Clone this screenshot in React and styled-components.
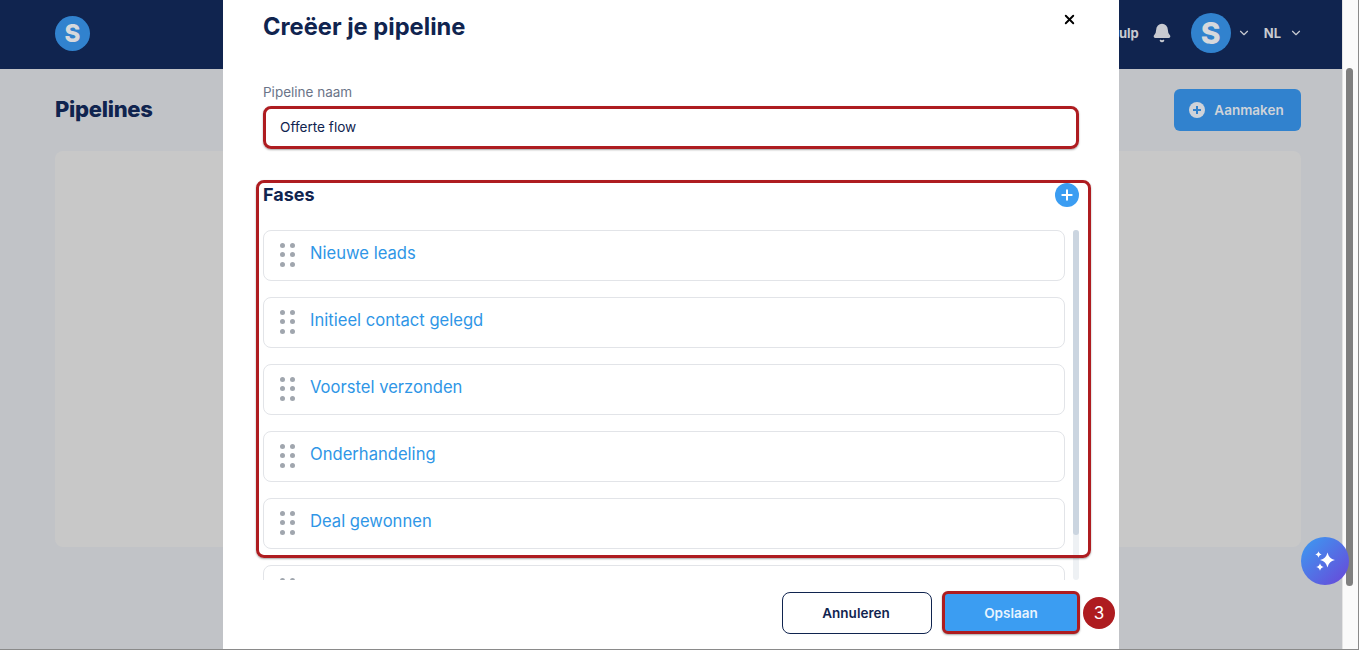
import React from 'react';
import styled, { createGlobalStyle } from 'styled-components';
import { ChevronDown, X, Plus, Bell } from 'lucide-react';

const Global = createGlobalStyle`
  html, body { margin: 0; padding: 0; height: 100%; overflow: hidden; background: #fff; }
  body { font-family: Inter, "Liberation Sans", sans-serif; }
  * { box-sizing: border-box; }
`;

const Frame = styled.div`
  position: relative;
  width: 1359px;
  height: 650px;
  display: flex;
  overflow: hidden;
  border-bottom: 1px solid #8a8a8a;
  border-right: 1px solid #8a8a8a;
`;
const Page = styled.div`
  flex: 1;
  min-width: 0;
  display: flex;
  flex-direction: column;
  background: #c1c3c7;
`;
const Navbar = styled.header`
  height: 69px;
  flex: none;
  background: #10244f;
  display: flex;
  align-items: center;
  padding: 0 39px 3px 55px;
  color: #c9cbd1;
`;
const LogoCircle = styled.div`
  width: ${p => p.$size}px;
  height: ${p => p.$size}px;
  border-radius: 50%;
  background: #3182ce;
  color: #d6d8dc;
  display: flex;
  align-items: center;
  justify-content: center;
  font-weight: 800;
  font-size: ${p => p.$font}px;
  line-height: 1;
  flex: none;
  margin: ${p => p.$margin || 0};
`;
const Spacer = styled.div`flex: 1;`;
const NavItem = styled.span`
  font-size: 13px;
  font-weight: 700;
  color: #c9cbd1;
  margin: ${p => p.$margin || 0};
`;
const NavCluster = styled.div`
  display: flex;
  align-items: center;
`;
const Main = styled.main`
  flex: 1;
  padding: 20px 41px 0 55px;
`;
const HeadRow = styled.div`
  display: flex;
  justify-content: space-between;
  align-items: center;
  height: 42px;
  margin-bottom: 20px;
`;
const PageTitle = styled.h1`
  margin: -2px 0 0;
  font-size: 22px;
  font-weight: 800;
  letter-spacing: -0.27px;
  color: #10244f;
`;
const CreateButton = styled.button`
  width: 127px;
  height: 42px;
  border: 0;
  border-radius: 6px;
  background: #3182ce;
  color: #cfd3d9;
  font: 600 13.5px Inter, sans-serif;
  display: flex;
  align-items: center;
  justify-content: center;
  gap: 9px;
  padding: 0 8px 0 6px;
`;
const EmptyCard = styled.div`
  height: 396px;
  border-radius: 8px;
  background: #c8c8c8;
`;
const ScrollColumn = styled.div`
  width: 16px;
  flex: none;
  background: #fafafa;
  border-left: 1px solid #e4e4e4;
  padding: 68px 5px 0 3px;
`;
const ScrollThumb = styled.div`
  height: 518px;
  border-radius: 4px;
  background: #7f7f7f;
`;
const Modal = styled.section`
  position: absolute;
  left: 223px;
  top: 0;
  width: 896px;
  height: 650px;
  background: #fff;
  padding: 12px 40px 0;
  display: flex;
  flex-direction: column;
`;
const ModalHead = styled.div`
  height: 30px;
  display: flex;
  justify-content: space-between;
  align-items: center;
  margin-bottom: 42px;
`;
const ModalTitle = styled.h2`
  margin: 0 0 1px;
  font-size: 23.7px;
  font-weight: 700;
  color: #10244f;
`;
const CloseButton = styled.button`
  border: 0;
  background: none;
  padding: 0;
  display: flex;
  color: #000;
  margin: -16px 2px 0 0;
`;
const FieldLabel = styled.label`
  display: block;
  font-size: 13.5px;
  line-height: 16px;
  color: #6b7488;
  margin-bottom: 6px;
`;
const NameInput = styled.div`
  width: 816px;
  height: 43px;
  border: 3px solid #ae1c20;
  border-radius: 8px;
  box-shadow: 0 1px 2px rgba(0,0,0,.35);
  padding: 0 0 1px 14px;
  display: flex;
  align-items: center;
  font-size: 13.6px;
  color: #10244f;
  margin-bottom: 31px;
`;
const Phases = styled.div`
  position: relative;
  height: 400px;
`;
const PhasesOutline = styled.div`
  position: absolute;
  left: -7px;
  top: 0;
  width: 835px;
  height: 378px;
  border: 3px solid #ae1c20;
  border-radius: 8px;
  box-shadow: 0 1px 2px rgba(0,0,0,.35);
  pointer-events: none;
  z-index: 2;
`;
const PhasesHead = styled.div`
  display: flex;
  justify-content: space-between;
  align-items: center;
  height: 28px;
  margin-bottom: 22px;
  width: 816px;
`;
const PhasesTitle = styled.h3`
  margin: 0;
  font-size: 18px;
  font-weight: 700;
  color: #10244f;
`;
const AddCircle = styled.span`
  width: 24px;
  height: 24px;
  margin-top: 2px;
  border-radius: 50%;
  background: #3b9df2;
  color: #fff;
  display: flex;
  align-items: center;
  justify-content: center;
`;
const ListViewport = styled.div`
  position: relative;
  width: 816px;
  height: 350px;
  overflow: hidden;
`;
const RowList = styled.div`
  width: 802px;
  display: flex;
  flex-direction: column;
  gap: 16px;
`;
const Row = styled.div`
  height: 51px;
  flex: none;
  border: 1px solid #e2e4e8;
  border-radius: 8px;
  display: flex;
  align-items: center;
  padding: 0 0 2px 16px;
  gap: 15px;
  font-size: 16.6px;
  color: #2f96e6;
`;
const RowName = styled.span`
  margin-bottom: 3px;
`;
const Grip = styled.span`
  display: grid;
  grid-template-columns: 5px 5px;
  gap: 4.5px 5px;
`;
const GripDot = styled.i`
  width: 5px;
  height: 5px;
  border-radius: 50%;
  background: #a0a6ae;
`;
const ListTrack = styled.div`
  position: absolute;
  right: 0;
  top: 0;
  bottom: 0;
  width: 6px;
  border-radius: 3px;
  background: #eef1f4;
`;
const ListThumb = styled.div`
  height: 305px;
  border-radius: 3px;
  background: #cbd5e0;
`;
const Footer = styled.div`
  position: absolute;
  left: 559px;
  top: 591px;
  display: flex;
  align-items: center;
`;
const CancelButton = styled.button`
  width: 150px;
  height: 42px;
  margin-right: 10px;
  background: #fff;
  border: 1px solid #10244f;
  border-radius: 8px;
  font: 600 13.5px Inter, sans-serif;
  color: #10244f;
  padding: 0 2px 0 0;
`;
const SaveButton = styled.button`
  width: 138px;
  height: 43px;
  background: #3b9df2;
  border: 3px solid #ae1c20;
  border-radius: 6px;
  box-shadow: 0 1px 2px rgba(0,0,0,.35);
  font: 600 13.5px Inter, sans-serif;
  color: #e9f4fe;
`;
const StepBadge = styled.span`
  width: 32px;
  height: 32px;
  margin-left: 3px;
  border-radius: 50%;
  background: #ae1c20;
  color: #fff;
  font-size: 17px;
  display: flex;
  align-items: center;
  justify-content: center;
`;
const AssistButton = styled.button`
  position: absolute;
  left: 1301px;
  top: 537px;
  width: 48px;
  height: 48px;
  padding: 0;
  border: 0;
  border-radius: 50%;
  background: linear-gradient(135deg, #3b9df2, #6a45d8);
  display: flex;
  align-items: center;
  justify-content: center;
`;

const phases = ['Nieuwe leads', 'Initieel contact gelegd', 'Voorstel verzonden', 'Onderhandeling', 'Deal gewonnen', ''];

const Sparkle = ({ cx, cy, r }) => (
  <path
    fill="#fff"
    d={`M${cx} ${cy - r}C${cx + r * 0.18} ${cy - r * 0.4} ${cx + r * 0.4} ${cy - r * 0.18} ${cx + r} ${cy}C${cx + r * 0.4} ${cy + r * 0.18} ${cx + r * 0.18} ${cy + r * 0.4} ${cx} ${cy + r}C${cx - r * 0.18} ${cy + r * 0.4} ${cx - r * 0.4} ${cy + r * 0.18} ${cx - r} ${cy}C${cx - r * 0.4} ${cy - r * 0.18} ${cx - r * 0.18} ${cy - r * 0.4} ${cx} ${cy - r}Z`}
  />
);

const BellIcon = styled(Bell)`
  margin-left: 13px;
`;
const NavChevron = styled(ChevronDown)`
  margin-left: ${p => p.$left || 0}px;
`;

export default function App() {
  return (
    <>
      <Global />
      <Frame>
        <Page>
          <Navbar>
            <LogoCircle $size={35} $font={24} $margin="1px 0 0">S</LogoCircle>
            <Spacer />
            <NavCluster>
              <NavItem>Hulp</NavItem>
              <BellIcon size={20} fill="#c9cbd1" color="#c9cbd1" />
              <LogoCircle $size={40} $font={30} $margin="0 0 0 19px">S</LogoCircle>
              <NavChevron size={14} color="#c9cbd1" $left={6} />
              <NavItem $margin="0 8px 0 13px">NL</NavItem>
              <NavChevron size={14} color="#c9cbd1" />
            </NavCluster>
          </Navbar>
          <Main>
            <HeadRow>
              <PageTitle>Pipelines</PageTitle>
              <CreateButton>
                <svg width="16" height="16" viewBox="0 0 16 16">
                  <circle cx="8" cy="8" r="8" fill="#cfd3d9" />
                  <path d="M8 4v8M4 8h8" stroke="#3182ce" strokeWidth="2" />
                </svg>
                Aanmaken
              </CreateButton>
            </HeadRow>
            <EmptyCard />
          </Main>
        </Page>
        <ScrollColumn><ScrollThumb /></ScrollColumn>
        <Modal>
          <ModalHead>
            <ModalTitle>Creëer je pipeline</ModalTitle>
            <CloseButton><X size={15} strokeWidth={3} /></CloseButton>
          </ModalHead>
          <FieldLabel>Pipeline naam</FieldLabel>
          <NameInput>Offerte flow</NameInput>
          <Phases>
            <PhasesOutline />
            <PhasesHead>
              <PhasesTitle>Fases</PhasesTitle>
              <AddCircle><Plus size={16} strokeWidth={3} /></AddCircle>
            </PhasesHead>
            <ListViewport>
              <RowList>
                {phases.map((name, i) => (
                  <Row key={i}>
                    <Grip>{Array.from({ length: 6 }, (_, d) => <GripDot key={d} />)}</Grip>
                    <RowName>{name}</RowName>
                  </Row>
                ))}
              </RowList>
              <ListTrack><ListThumb /></ListTrack>
            </ListViewport>
          </Phases>
          <Footer>
            <CancelButton>Annuleren</CancelButton>
            <SaveButton>Opslaan</SaveButton>
            <StepBadge>3</StepBadge>
          </Footer>
        </Modal>
        <AssistButton aria-label="Assistent">
          <svg width="26" height="26" viewBox="0 0 26 26">
            <Sparkle cx={15.5} cy={12} r={7.5} />
            <Sparkle cx={6.5} cy={6.5} r={3.2} />
            <Sparkle cx={8} cy={19} r={3.8} />
          </svg>
        </AssistButton>
      </Frame>
    </>
  );
}
